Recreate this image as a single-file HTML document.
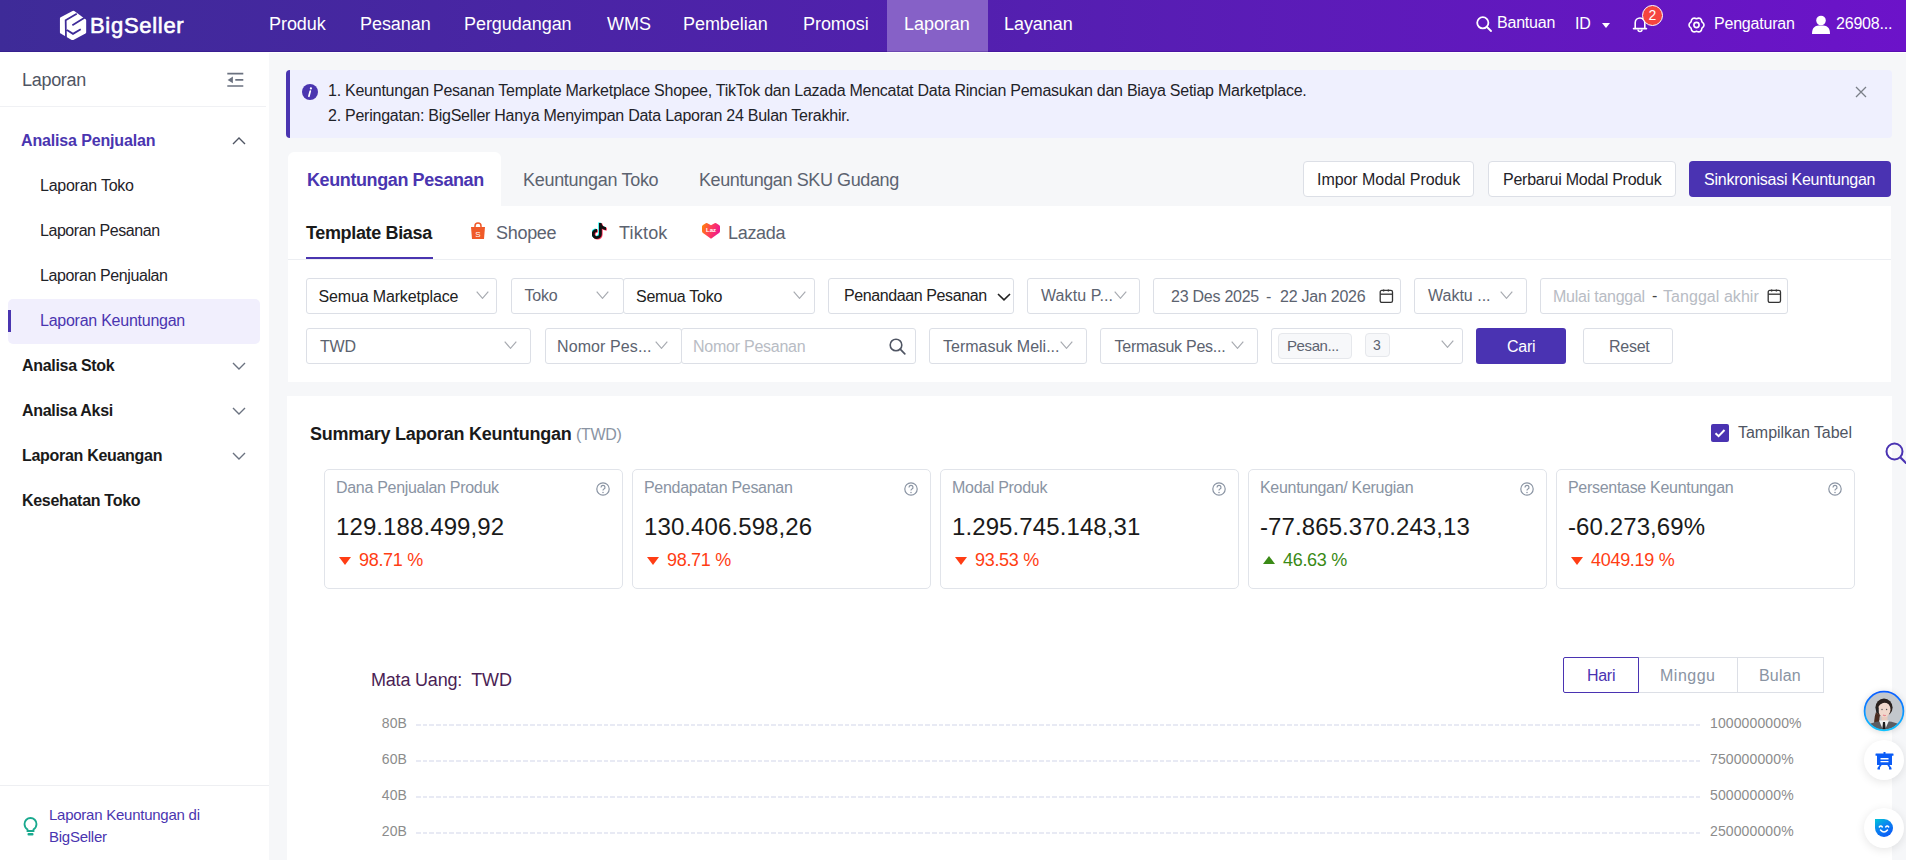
<!DOCTYPE html>
<html><head><meta charset="utf-8">
<style>
*{box-sizing:border-box;margin:0;padding:0}
html,body{width:1906px;height:860px;overflow:hidden;background:#f6f7f9;font-family:"Liberation Sans",sans-serif;color:#1f2329}
.a{position:absolute}
.t{position:absolute;white-space:nowrap;line-height:1}
.hdr{position:absolute;left:0;top:0;width:1906px;height:52px;background:linear-gradient(90deg,#3e2b98 0%,#5220ae 50%,#6c13c9 100%)}
.nav{position:absolute;top:15px;font-size:18px;color:#fff;letter-spacing:-0.05px}
.hr{position:absolute;font-size:16px;color:#fff;letter-spacing:-0.2px}
.side{position:absolute;left:0;top:52px;width:269px;height:808px;background:#fff}
.box{position:absolute;border:1px solid #dcdfe6;border-radius:3px;background:#fff}
.ft{font-size:16px;color:#222;letter-spacing:-0.25px}
.gray{color:#5c6370}
.ph{color:#b8bcc4}
.chev{position:absolute;width:13px;height:10px}
.btn{position:absolute;border:1px solid #dcdfe6;border-radius:4px;background:#fff}
.card{position:absolute;top:469px;width:299px;height:120px;border:1px solid #e1e4ea;border-radius:5px;background:#fff}
.lab{position:absolute;left:11px;top:10px;font-size:16px;color:#8a94a3;letter-spacing:-0.3px;white-space:nowrap;line-height:1}
.val{position:absolute;left:11px;top:45px;font-size:24px;color:#1a1a1a;letter-spacing:0.1px;white-space:nowrap;line-height:1}
.pct{position:absolute;left:34px;top:81px;font-size:18px;color:#ff3d14;letter-spacing:-0.3px;white-space:nowrap;line-height:1}
.pct.up{color:#3a8a16}
.tri{position:absolute;left:14px;top:87px;width:0;height:0;border-left:6px solid transparent;border-right:6px solid transparent;border-top:8px solid #ff3d14}
.tri.up{border-top:0;border-bottom:8px solid #3a8a16;top:86px}
.help{position:absolute;right:12px;top:12px;width:14px;height:14px}
.si{position:absolute;left:40px;font-size:16px;color:#1f2329;letter-spacing:-0.25px}
.sb{position:absolute;left:22px;font-size:16px;font-weight:700;color:#1a1a1a;letter-spacing:-0.3px}
.gl{position:absolute;left:416px;width:1285px;height:2px;background:repeating-linear-gradient(90deg,#e8eaf4 0 4.7px,transparent 4.7px 6.7px)}
.yl{position:absolute;font-size:14px;color:#8c8c8c;letter-spacing:0.12px}
</style></head><body>

<!-- HEADER -->
<div class="hdr"></div>
<svg class="a" style="left:55px;top:8px" width="40" height="36" viewBox="0 0 956 860"><path d="M420 70 Q440 62 460 72 L730 270 Q745 282 745 300 L745 580 Q745 600 728 610 L440 762 Q420 772 400 762 L135 612 Q118 602 118 585 L118 245 Q118 228 135 218 Z" fill="#fff"/><path d="M520 135 L255 292 L262 700 M705 232 L415 410 M285 528 L430 618 L615 505" fill="none" stroke="#3e2b98" stroke-width="42" stroke-linejoin="miter"/></svg>
<div class="t" style="left:90px;top:15px;font-size:22px;font-weight:400;color:#fff;letter-spacing:0.7px;-webkit-text-stroke:0.6px #fff">BigSeller</div>

<div class="t nav" style="left:269px">Produk</div>
<div class="t nav" style="left:360px">Pesanan</div>
<div class="t nav" style="left:464px">Pergudangan</div>
<div class="t nav" style="left:607px">WMS</div>
<div class="t nav" style="left:683px">Pembelian</div>
<div class="t nav" style="left:803px">Promosi</div>
<div class="a" style="left:887px;top:0;width:101px;height:52px;background:#8661c7"></div>
<div class="t nav" style="left:904px">Laporan</div>
<div class="t nav" style="left:1004px">Layanan</div>

<svg class="a" style="left:1476px;top:16px" width="16" height="16" viewBox="0 0 16 16"><circle cx="6.8" cy="6.8" r="5.6" fill="none" stroke="#fff" stroke-width="1.8"/><path d="M11 11 L15 15" stroke="#fff" stroke-width="1.8" stroke-linecap="round"/></svg>
<div class="t hr" style="left:1497px;top:15px">Bantuan</div>
<div class="t hr" style="left:1575px;top:16px">ID</div>
<div class="a" style="left:1602px;top:23px;width:0;height:0;border-left:4px solid transparent;border-right:4px solid transparent;border-top:5px solid #fff"></div>
<svg class="a" style="left:1632px;top:16px" width="16" height="18" viewBox="0 0 16 18"><path d="M3.2 12.3 L3.2 6.8 A4.8 4.8 0 0 1 12.8 6.8 L12.8 12.3" fill="none" stroke="#fff" stroke-width="1.6"/><path d="M1.6 12.6 L14.4 12.6" stroke="#fff" stroke-width="1.7" stroke-linecap="round"/><path d="M6 13.5 A2 2 0 0 0 10 13.5" fill="none" stroke="#fff" stroke-width="1.5"/></svg>
<div class="a" style="left:1642px;top:5px;width:21px;height:21px;border-radius:50%;background:#f5443f;border:1px solid #fff"></div>
<div class="t" style="left:1642px;width:21px;text-align:center;top:8px;font-size:14px;color:#fff">2</div>
<svg class="a" style="left:1688px;top:17px" width="17" height="16" viewBox="0 0 17 16"><path d="M13.96 4.85 Q18.10 8.00 13.96 11.15 Q13.30 16.31 8.50 14.30 Q3.70 16.31 3.04 11.15 Q-1.10 8.00 3.04 4.85 Q3.70 -0.31 8.50 1.70 Q13.30 -0.31 13.96 4.85 Z" fill="none" stroke="#fff" stroke-width="1.6" stroke-linejoin="round"/><circle cx="8.5" cy="8" r="2.6" fill="none" stroke="#fff" stroke-width="1.6"/></svg>
<div class="t hr" style="left:1714px;top:16px">Pengaturan</div>
<svg class="a" style="left:1811px;top:15px" width="20" height="19" viewBox="0 0 20 19"><circle cx="10" cy="5.5" r="4.8" fill="#fff"/><path d="M1 19 C1 12 4 10.5 10 10.5 C16 10.5 19 12 19 19 Z" fill="#fff"/></svg>
<div class="t hr" style="left:1836px;top:16px">26908...</div>

<div class="a" style="left:0;top:51px;width:1906px;height:1px;background:rgba(30,0,110,0.25)"></div>
<div class="a" style="left:0;top:52px;width:1906px;height:1px;background:#fff"></div>
<!-- SIDEBAR -->
<div class="side"></div>
<div class="a" style="left:0;top:106px;width:266px;height:1px;background:#f0f1f4"></div>
<div class="t" style="left:22px;top:71px;font-size:18px;color:#4f5563;letter-spacing:-0.3px">Laporan</div>
<svg class="a" style="left:227px;top:72px" width="17" height="16" viewBox="0 0 17 16"><path d="M0.3 1.6 L16.3 1.6 M8.3 7.9 L16.3 7.9 M0.3 14 L16.3 14" stroke="#6b7280" stroke-width="1.7"/><path d="M0.6 7.9 L5.9 4.6 L5.9 11.2 Z" fill="#6b7280"/></svg>

<div class="t sb" style="left:21px;top:133px;color:#4a35b0;letter-spacing:-0.15px">Analisa Penjualan</div>
<svg class="a" style="left:232px;top:136px" width="14" height="9" viewBox="0 0 14 9"><path d="M1 8 L7 2 L13 8" fill="none" stroke="#4f5563" stroke-width="1.4"/></svg>
<div class="t si" style="top:178px">Laporan Toko</div>
<div class="t si" style="top:223px;letter-spacing:-0.45px">Laporan Pesanan</div>
<div class="t si" style="top:268px;letter-spacing:-0.4px">Laporan Penjualan</div>
<div class="a" style="left:8px;top:299px;width:252px;height:45px;background:#f1effd;border-radius:5px"></div>
<div class="a" style="left:8px;top:310px;width:3px;height:22px;background:#4a35b0"></div>
<div class="t si" style="top:313px;color:#4a35b0">Laporan Keuntungan</div>
<div class="t sb" style="top:358px">Analisa Stok</div>
<div class="t sb" style="top:403px">Analisa Aksi</div>
<div class="t sb" style="top:448px">Laporan Keuangan</div>
<div class="t sb" style="top:493px">Kesehatan Toko</div>
<svg class="a" style="left:232px;top:362px" width="14" height="9" viewBox="0 0 14 9"><path d="M1 1 L7 7 L13 1" fill="none" stroke="#6b7280" stroke-width="1.4"/></svg>
<svg class="a" style="left:232px;top:407px" width="14" height="9" viewBox="0 0 14 9"><path d="M1 1 L7 7 L13 1" fill="none" stroke="#6b7280" stroke-width="1.4"/></svg>
<svg class="a" style="left:232px;top:452px" width="14" height="9" viewBox="0 0 14 9"><path d="M1 1 L7 7 L13 1" fill="none" stroke="#6b7280" stroke-width="1.4"/></svg>

<div class="a" style="left:0;top:785px;width:269px;height:1px;background:#eeeff2"></div>
<svg class="a" style="left:23px;top:817px" width="15" height="20" viewBox="0 0 15 20"><path d="M4.5 12.5 C2.5 11 1.5 9 1.5 7 A6 6 0 0 1 13.5 7 C13.5 9 12.5 11 10.5 12.5 L10.5 14 L4.5 14 Z" fill="none" stroke="#19a98e" stroke-width="1.8"/><rect x="4.5" y="16" width="6" height="2.6" rx="1" fill="#19a98e"/></svg>
<div class="t" style="left:49px;top:804px;font-size:15px;color:#4a35b0;letter-spacing:-0.25px;line-height:22px">Laporan Keuntungan di<br>BigSeller</div>


<!-- INFO BAR -->
<div class="a" style="left:286px;top:70px;width:1606px;height:68px;background:#eff0fe;border-radius:4px;border-left:4px solid #4a35b0"></div>
<svg class="a" style="left:302px;top:84px" width="16" height="16" viewBox="0 0 16 16"><circle cx="8" cy="8" r="8" fill="#4a35b0"/><circle cx="8.9" cy="4.4" r="1.1" fill="#fff"/><path d="M8.3 7 L6.9 12.3" stroke="#fff" stroke-width="1.7" stroke-linecap="round"/></svg>
<div class="t" style="left:328px;top:83px;font-size:16px;color:#1f2329;letter-spacing:-0.25px">1. Keuntungan Pesanan Template Marketplace Shopee, TikTok dan Lazada Mencatat Data Rincian Pemasukan dan Biaya Setiap Marketplace.</div>
<div class="t" style="left:328px;top:108px;font-size:16px;color:#1f2329;letter-spacing:-0.25px">2. Peringatan: BigSeller Hanya Menyimpan Data Laporan 24 Bulan Terakhir.</div>
<svg class="a" style="left:1855px;top:86px" width="12" height="12" viewBox="0 0 12 12"><path d="M1 1 L11 11 M11 1 L1 11" stroke="#7a7f88" stroke-width="1.3"/></svg>

<!-- TABS -->
<div class="a" style="left:288px;top:152px;width:213px;height:60px;background:#fff;border-radius:6px 6px 0 0"></div>
<div class="a" style="left:288px;top:206px;width:1603px;height:176px;background:#fff"></div>
<div class="t" style="left:307px;top:171px;font-size:18px;font-weight:700;color:#4a35b0;letter-spacing:-0.4px">Keuntungan Pesanan</div>
<div class="t" style="left:523px;top:171px;font-size:18px;color:#5c6370;letter-spacing:-0.3px">Keuntungan Toko</div>
<div class="t" style="left:699px;top:171px;font-size:18px;color:#5c6370;letter-spacing:-0.4px">Keuntungan SKU Gudang</div>
<div class="btn" style="left:1303px;top:161px;width:171px;height:36px"></div>
<div class="t" style="left:1317px;top:172px;font-size:16px;color:#1f2329;letter-spacing:-0.05px">Impor Modal Produk</div>
<div class="btn" style="left:1488px;top:161px;width:188px;height:36px"></div>
<div class="t" style="left:1503px;top:172px;font-size:16px;color:#1f2329;letter-spacing:-0.25px">Perbarui Modal Produk</div>
<div class="a" style="left:1689px;top:161px;width:202px;height:36px;background:#4a33b2;border-radius:4px"></div>
<div class="t" style="left:1704px;top:172px;font-size:16px;color:#fff;letter-spacing:-0.25px">Sinkronisasi Keuntungan</div>

<!-- TEMPLATE TABS -->
<div class="a" style="left:288px;top:259px;width:1603px;height:1px;background:#eceef2"></div>
<div class="t" style="left:306px;top:224px;font-size:18px;font-weight:700;color:#1a1a1a;letter-spacing:-0.35px">Template Biasa</div>
<div class="a" style="left:306px;top:257px;width:127px;height:2px;background:#4a35b0"></div>
<svg class="a" style="left:470px;top:222px" width="16" height="18" viewBox="0 0 16 18"><path d="M1 5 L15 5 L14 17 L2 17 Z" fill="#f05a29"/><path d="M5 6 L5 4 A3 3 0 0 1 11 4 L11 6" fill="none" stroke="#f05a29" stroke-width="1.5"/><text x="8" y="14.5" font-size="8" fill="#fff" text-anchor="middle" font-family="Liberation Sans">S</text></svg>
<div class="t" style="left:496px;top:224px;font-size:18px;color:#5c6370;letter-spacing:-0.3px">Shopee</div>
<svg class="a" style="left:592px;top:222px" width="16" height="18" viewBox="0 0 16 18">
<path d="M9.5 1 C9.8 3.5 11.5 5 14 5.2 L14 8 C12.4 8 11 7.5 9.8 6.6 L9.8 12 A5 5 0 1 1 5 7 L5 9.9 A2.2 2.2 0 1 0 7 12 L7 1 Z" fill="#25f4ee" transform="translate(-0.8,-0.6)"/>
<path d="M9.5 1 C9.8 3.5 11.5 5 14 5.2 L14 8 C12.4 8 11 7.5 9.8 6.6 L9.8 12 A5 5 0 1 1 5 7 L5 9.9 A2.2 2.2 0 1 0 7 12 L7 1 Z" fill="#fe2c55" transform="translate(0.8,0.6)"/>
<path d="M9.5 1 C9.8 3.5 11.5 5 14 5.2 L14 8 C12.4 8 11 7.5 9.8 6.6 L9.8 12 A5 5 0 1 1 5 7 L5 9.9 A2.2 2.2 0 1 0 7 12 L7 1 Z" fill="#111"/></svg>
<div class="t" style="left:619px;top:224px;font-size:18px;color:#5c6370;letter-spacing:0.2px">Tiktok</div>
<svg class="a" style="left:701px;top:222px" width="20" height="18" viewBox="0 0 20 18"><defs><linearGradient id="lz" x1="0" y1="0" x2="1" y2="0.3"><stop offset="0" stop-color="#ff8a00"/><stop offset="0.55" stop-color="#ff3d5a"/><stop offset="1" stop-color="#ee1a8c"/></linearGradient></defs><path d="M10 16.8 L2 11 Q1 10.3 1 9 L1 4.6 Q1 3.6 2 3 L4.8 1.3 Q5.6 0.9 6.4 1.3 L10 3.2 L13.6 1.3 Q14.4 0.9 15.2 1.3 L18 3 Q19 3.6 19 4.6 L19 9 Q19 10.3 18 11 Z" fill="url(#lz)"/><text x="10" y="9.6" font-size="6" fill="#fff" text-anchor="middle" font-family="Liberation Sans" font-weight="700">Laz</text></svg>
<div class="t" style="left:728px;top:224px;font-size:18px;color:#5c6370;letter-spacing:-0.3px">Lazada</div>

<!-- FILTERS -->
<div class="box" style="left:306px;top:278px;width:191px;height:36px;"></div>
<div class="t ft" style="left:318.5px;top:289px;letter-spacing:-0.15px">Semua Marketplace</div>
<svg class="a" style="left:476px;top:291px" width="13" height="8" viewBox="0 0 13 8"><path d="M0.7 0.7 L6.5 7.3 L12.3 0.7" fill="none" stroke="#a8abb1" stroke-width="1.2"/></svg>
<div class="box" style="left:511px;top:278px;width:113px;height:36px;"></div>
<div class="t ft gray" style="left:524.5px;top:288px;">Toko</div>
<svg class="a" style="left:596px;top:291px" width="13" height="8" viewBox="0 0 13 8"><path d="M0.7 0.7 L6.5 7.3 L12.3 0.7" fill="none" stroke="#a8abb1" stroke-width="1.2"/></svg>
<div class="box" style="left:623px;top:278px;width:192px;height:36px;"></div>
<div class="t ft" style="left:636px;top:289px;">Semua Toko</div>
<svg class="a" style="left:793px;top:291px" width="13" height="8" viewBox="0 0 13 8"><path d="M0.7 0.7 L6.5 7.3 L12.3 0.7" fill="none" stroke="#a8abb1" stroke-width="1.2"/></svg>
<div class="box" style="left:828px;top:278px;width:186px;height:36px;"></div>
<div class="t ft" style="left:844px;top:288px;letter-spacing:-0.4px">Penandaan Pesanan</div>
<svg class="a" style="left:997px;top:292.5px" width="14" height="8" viewBox="0 0 14 8"><path d="M1 1 L7 6.8 L13 1" fill="none" stroke="#222" stroke-width="1.6"/></svg>
<div class="box" style="left:1027px;top:278px;width:113px;height:36px;"></div>
<div class="t ft gray" style="left:1041px;top:288px;letter-spacing:0.1px">Waktu P...</div>
<svg class="a" style="left:1114px;top:291px" width="13" height="8" viewBox="0 0 13 8"><path d="M0.7 0.7 L6.5 7.3 L12.3 0.7" fill="none" stroke="#a8abb1" stroke-width="1.2"/></svg>
<div class="box" style="left:1153px;top:278px;width:248px;height:36px;"></div>
<div class="t ft gray" style="left:1171px;top:289px;">23 Des 2025</div>
<div class="t ft gray" style="left:1266px;top:289px;">-</div>
<div class="t ft gray" style="left:1280px;top:289px;">22 Jan 2026</div>
<svg class="a" style="left:1379px;top:289px" width="15" height="15" viewBox="0 0 15 15"><rect x="1.2" y="1.4" width="12.3" height="12" rx="1.6" fill="none" stroke="#333" stroke-width="1.3"/><path d="M1.2 5.2 L13.5 5.2" stroke="#333" stroke-width="1.3"/><path d="M4.6 0.6 L4.6 2.6 M9.4 0.6 L9.4 2.6" stroke="#333" stroke-width="1.4"/></svg>
<div class="box" style="left:1414px;top:278px;width:113px;height:36px;"></div>
<div class="t ft gray" style="left:1428px;top:288px;letter-spacing:0px">Waktu ...</div>
<svg class="a" style="left:1500px;top:291px" width="13" height="8" viewBox="0 0 13 8"><path d="M0.7 0.7 L6.5 7.3 L12.3 0.7" fill="none" stroke="#a8abb1" stroke-width="1.2"/></svg>
<div class="box" style="left:1540px;top:278px;width:248px;height:36px;"></div>
<div class="t ft ph" style="left:1553px;top:289px;">Mulai tanggal</div>
<div class="t ft gray" style="left:1652px;top:288px;color:#444">-</div>
<div class="t ft ph" style="left:1663px;top:289px;letter-spacing:0.05px">Tanggal akhir</div>
<svg class="a" style="left:1767px;top:289px" width="15" height="15" viewBox="0 0 15 15"><rect x="1.2" y="1.4" width="12.3" height="12" rx="1.6" fill="none" stroke="#333" stroke-width="1.3"/><path d="M1.2 5.2 L13.5 5.2" stroke="#333" stroke-width="1.3"/><path d="M4.6 0.6 L4.6 2.6 M9.4 0.6 L9.4 2.6" stroke="#333" stroke-width="1.4"/></svg>
<div class="box" style="left:306px;top:328px;width:225px;height:36px;"></div>
<div class="t ft gray" style="left:320px;top:339px;">TWD</div>
<svg class="a" style="left:504px;top:341px" width="13" height="8" viewBox="0 0 13 8"><path d="M0.7 0.7 L6.5 7.3 L12.3 0.7" fill="none" stroke="#a8abb1" stroke-width="1.2"/></svg>
<div class="box" style="left:545px;top:328px;width:137px;height:36px;"></div>
<div class="t ft gray" style="left:557px;top:339px;letter-spacing:0.1px">Nomor Pes...</div>
<svg class="a" style="left:655px;top:341px" width="13" height="8" viewBox="0 0 13 8"><path d="M0.7 0.7 L6.5 7.3 L12.3 0.7" fill="none" stroke="#a8abb1" stroke-width="1.2"/></svg>
<div class="box" style="left:681px;top:328px;width:235px;height:36px;"></div>
<div class="t ft ph" style="left:693px;top:339px;">Nomor Pesanan</div>
<svg class="a" style="left:889px;top:338px" width="17" height="17" viewBox="0 0 17 17"><circle cx="7" cy="7" r="5.8" fill="none" stroke="#4f5563" stroke-width="1.6"/><path d="M11.2 11.2 L15.8 15.8" stroke="#4f5563" stroke-width="1.7" stroke-linecap="round"/></svg>
<div class="box" style="left:929px;top:328px;width:158px;height:36px;"></div>
<div class="t ft gray" style="left:943px;top:339px;letter-spacing:0px">Termasuk Meli...</div>
<svg class="a" style="left:1060px;top:341px" width="13" height="8" viewBox="0 0 13 8"><path d="M0.7 0.7 L6.5 7.3 L12.3 0.7" fill="none" stroke="#a8abb1" stroke-width="1.2"/></svg>
<div class="box" style="left:1100px;top:328px;width:158px;height:36px;"></div>
<div class="t ft gray" style="left:1114.5px;top:339px;">Termasuk Pes...</div>
<svg class="a" style="left:1231px;top:341px" width="13" height="8" viewBox="0 0 13 8"><path d="M0.7 0.7 L6.5 7.3 L12.3 0.7" fill="none" stroke="#a8abb1" stroke-width="1.2"/></svg>
<div class="box" style="left:1271px;top:328px;width:192px;height:36px;"></div>
<div class="a" style="left:1278px;top:333px;width:74px;height:26px;background:#f7f8fa;border:1px solid #e6e8ec;border-radius:4px"></div>
<div class="t ft gray" style="left:1287px;top:338px;font-size:15px;letter-spacing:-0.4px">Pesan...</div>
<div class="a" style="left:1365px;top:333px;width:25px;height:24px;background:#f7f8fa;border:1px solid #e6e8ec;border-radius:4px"></div>
<div class="t ft gray" style="left:1373px;top:338px;font-size:14px">3</div>
<svg class="a" style="left:1441px;top:340px" width="13" height="8" viewBox="0 0 13 8"><path d="M0.7 0.7 L6.5 7.3 L12.3 0.7" fill="none" stroke="#a8abb1" stroke-width="1.2"/></svg>
<div class="a" style="left:1476px;top:328px;width:90px;height:36px;background:#4a33b2;border-radius:3px"></div>
<div class="t ft" style="left:1507px;top:339px;color:#fff">Cari</div>
<div class="box" style="left:1583px;top:328px;width:90px;height:36px;"></div>
<div class="t ft gray" style="left:1609px;top:339px;">Reset</div>
<!-- SUMMARY -->
<div class="a" style="left:287px;top:396px;width:1605px;height:470px;background:#fff"></div>
<div class="t" style="left:310px;top:425px;font-size:18px;font-weight:700;color:#1a1a1a;letter-spacing:-0.25px">Summary Laporan Keuntungan</div>
<div class="t" style="left:576px;top:427px;font-size:16px;color:#8a94a3;letter-spacing:-0.3px">(TWD)</div>
<div class="a" style="left:1711px;top:424px;width:18px;height:18px;background:#4a33b2;border-radius:2px"></div>
<svg class="a" style="left:1711px;top:424px" width="18" height="18" viewBox="0 0 18 18"><path d="M4.5 9.2 L7.6 12.2 L13.5 6" fill="none" stroke="#fff" stroke-width="2"/></svg>
<div class="t" style="left:1738px;top:425px;font-size:16px;color:#4f5563;letter-spacing:-0.03px">Tampilkan Tabel</div>
<div class="card" style="left:324px"><div class="lab">Dana Penjualan Produk</div><svg class="help" viewBox="0 0 14 14"><circle cx="7" cy="7" r="6.2" fill="none" stroke="#8a94a3" stroke-width="1.2"/><path d="M5 5.4 A2 2 0 1 1 7.6 7.3 C7.1 7.5 7 7.8 7 8.6" fill="none" stroke="#8a94a3" stroke-width="1.2"/><circle cx="7" cy="10.4" r="0.75" fill="#8a94a3"/></svg><div class="val">129.188.499,92</div><div class="tri"></div><div class="pct">98.71 %</div></div>
<div class="card" style="left:632px"><div class="lab">Pendapatan Pesanan</div><svg class="help" viewBox="0 0 14 14"><circle cx="7" cy="7" r="6.2" fill="none" stroke="#8a94a3" stroke-width="1.2"/><path d="M5 5.4 A2 2 0 1 1 7.6 7.3 C7.1 7.5 7 7.8 7 8.6" fill="none" stroke="#8a94a3" stroke-width="1.2"/><circle cx="7" cy="10.4" r="0.75" fill="#8a94a3"/></svg><div class="val">130.406.598,26</div><div class="tri"></div><div class="pct">98.71 %</div></div>
<div class="card" style="left:940px"><div class="lab">Modal Produk</div><svg class="help" viewBox="0 0 14 14"><circle cx="7" cy="7" r="6.2" fill="none" stroke="#8a94a3" stroke-width="1.2"/><path d="M5 5.4 A2 2 0 1 1 7.6 7.3 C7.1 7.5 7 7.8 7 8.6" fill="none" stroke="#8a94a3" stroke-width="1.2"/><circle cx="7" cy="10.4" r="0.75" fill="#8a94a3"/></svg><div class="val">1.295.745.148,31</div><div class="tri"></div><div class="pct">93.53 %</div></div>
<div class="card" style="left:1248px"><div class="lab">Keuntungan/ Kerugian</div><svg class="help" viewBox="0 0 14 14"><circle cx="7" cy="7" r="6.2" fill="none" stroke="#8a94a3" stroke-width="1.2"/><path d="M5 5.4 A2 2 0 1 1 7.6 7.3 C7.1 7.5 7 7.8 7 8.6" fill="none" stroke="#8a94a3" stroke-width="1.2"/><circle cx="7" cy="10.4" r="0.75" fill="#8a94a3"/></svg><div class="val">-77.865.370.243,13</div><div class="tri up"></div><div class="pct up">46.63 %</div></div>
<div class="card" style="left:1556px"><div class="lab">Persentase Keuntungan</div><svg class="help" viewBox="0 0 14 14"><circle cx="7" cy="7" r="6.2" fill="none" stroke="#8a94a3" stroke-width="1.2"/><path d="M5 5.4 A2 2 0 1 1 7.6 7.3 C7.1 7.5 7 7.8 7 8.6" fill="none" stroke="#8a94a3" stroke-width="1.2"/><circle cx="7" cy="10.4" r="0.75" fill="#8a94a3"/></svg><div class="val">-60.273,69%</div><div class="tri"></div><div class="pct">4049.19 %</div></div>
<div class="t" style="left:371px;top:671px;font-size:18px;color:#4b1f55;letter-spacing:-0.2px">Mata Uang:&nbsp; TWD</div>
<div class="a" style="left:1638px;top:657px;width:186px;height:36px;border:1px solid #dcdfe6;background:#fff"></div>
<div class="a" style="left:1737px;top:657px;width:1px;height:36px;background:#dcdfe6"></div>
<div class="a" style="left:1563px;top:657px;width:76px;height:36px;border:1px solid #4a33b2;background:#fff;border-radius:2px 0 0 2px"></div>
<div class="t" style="left:1587px;top:668px;font-size:16px;color:#4a33b2;letter-spacing:-0.3px">Hari</div>
<div class="t" style="left:1660px;top:668px;font-size:16px;color:#8a94a3;letter-spacing:0.5px">Minggu</div>
<div class="t" style="left:1759px;top:668px;font-size:16px;color:#8a94a3;letter-spacing:0.2px">Bulan</div>
<div class="gl" style="top:724px"></div>
<div class="t yl" style="left:366px;width:41px;text-align:right;top:716px;letter-spacing:0.1px">80B</div>
<div class="t yl" style="left:1710px;top:716px">1000000000%</div>
<div class="gl" style="top:760px"></div>
<div class="t yl" style="left:366px;width:41px;text-align:right;top:752px;letter-spacing:0.1px">60B</div>
<div class="t yl" style="left:1710px;top:752px">750000000%</div>
<div class="gl" style="top:796px"></div>
<div class="t yl" style="left:366px;width:41px;text-align:right;top:788px;letter-spacing:0.1px">40B</div>
<div class="t yl" style="left:1710px;top:788px">500000000%</div>
<div class="gl" style="top:832px"></div>
<div class="t yl" style="left:366px;width:41px;text-align:right;top:824px;letter-spacing:0.1px">20B</div>
<div class="t yl" style="left:1710px;top:824px">250000000%</div>
<svg class="a" style="left:1885px;top:442px" width="21" height="22" viewBox="0 0 21 22"><circle cx="9.5" cy="9.5" r="8" fill="none" stroke="#4a33b2" stroke-width="2"/><path d="M15.5 15.5 L22 22" stroke="#4a33b2" stroke-width="2.2"/></svg>
<svg class="a" style="left:1863px;top:690px;filter:drop-shadow(0 1px 3px rgba(0,0,0,0.15))" width="42" height="42" viewBox="0 0 42 42"><defs><linearGradient id="rg" x1="0" y1="0" x2="0" y2="1"><stop offset="0" stop-color="#0a5cff"/><stop offset="1" stop-color="#0fc3ff"/></linearGradient><clipPath id="cp"><circle cx="21" cy="21" r="18.6"/></clipPath></defs>
<g clip-path="url(#cp)"><rect width="42" height="42" fill="#c3c7cc"/>
<ellipse cx="21" cy="17.5" rx="8.6" ry="9" fill="#2a211d"/>
<path d="M13 22 Q10 30 12 40 L17 40 Q15.5 31 17 25 Z" fill="#4a2e22"/>
<rect x="18.5" y="24" width="6" height="8" fill="#e9cbbd"/>
<path d="M3 42 L6 34 Q21 28 36 34 L39 42 Z" fill="#5b5d62"/>
<path d="M16 30.5 L21 42 L26 30.5 Z" fill="#f2f2f2"/>
<path d="M20 32 L22 32 L22.8 40 L19.2 40 Z" fill="#1d1d1f"/>
<ellipse cx="21.3" cy="19.6" rx="6.2" ry="7.6" fill="#f1d8cc"/>
<path d="M14.5 17 Q15 9.5 21 9.5 Q27 9.5 28 17 Q25 12 20 13 Q17 14 14.5 17 Z" fill="#2a211d"/>
<rect x="13.3" y="17" width="2.4" height="6" rx="1.1" fill="#222"/>
<path d="M20 25 Q21.5 26 23 25.3" stroke="#e88a95" stroke-width="1.1" fill="none"/>
<circle cx="19" cy="19.5" r="0.7" fill="#555"/><circle cx="23.6" cy="19.5" r="0.7" fill="#555"/>
</g><circle cx="21" cy="21" r="19.4" fill="none" stroke="url(#rg)" stroke-width="1.8"/></svg>
<div class="a" style="left:1864px;top:740px;width:40px;height:40px;border-radius:50%;background:#fff;box-shadow:0 2px 10px rgba(0,0,0,0.10)"></div>
<svg class="a" style="left:1875px;top:752px" width="19" height="18" viewBox="0 0 19 18"><rect x="8.5" y="0" width="2" height="2" fill="#0b5cf6"/><rect x="0.5" y="1.5" width="18" height="2.2" rx="0.5" fill="#0b5cf6"/><rect x="2" y="3" width="15" height="10" fill="#0b5cf6"/><path d="M5.5 6.8 L13.5 6.8 M5.5 9.6 L13.5 9.6" stroke="#fff" stroke-width="1.4"/><path d="M6 12.5 L3 16.8 M13 12.5 L16 16.8 M2.5 16.6 L5 16.6 M14 16.6 L16.5 16.6" stroke="#0b5cf6" stroke-width="1.7"/></svg>
<div class="a" style="left:1864px;top:808px;width:40px;height:40px;border-radius:50%;background:#fff;box-shadow:0 2px 10px rgba(0,0,0,0.10)"></div>
<svg class="a" style="left:1875px;top:819px" width="18" height="18" viewBox="0 0 18 18"><defs><linearGradient id="sm" x1="0" y1="0" x2="0.6" y2="1"><stop offset="0" stop-color="#00c6d8"/><stop offset="0.5" stop-color="#0a84f0"/><stop offset="1" stop-color="#0b5cf6"/></linearGradient></defs><path d="M0 0 L9 0 A9 9 0 1 1 0 9 Z" fill="url(#sm)"/><path d="M4.3 8 Q5.8 5.8 7.3 8 M10.7 8 Q12.2 5.8 13.7 8 M5.5 11 Q9 15 12.5 11" fill="none" stroke="#fff" stroke-width="1.5" stroke-linecap="round"/></svg>
</body></html>
